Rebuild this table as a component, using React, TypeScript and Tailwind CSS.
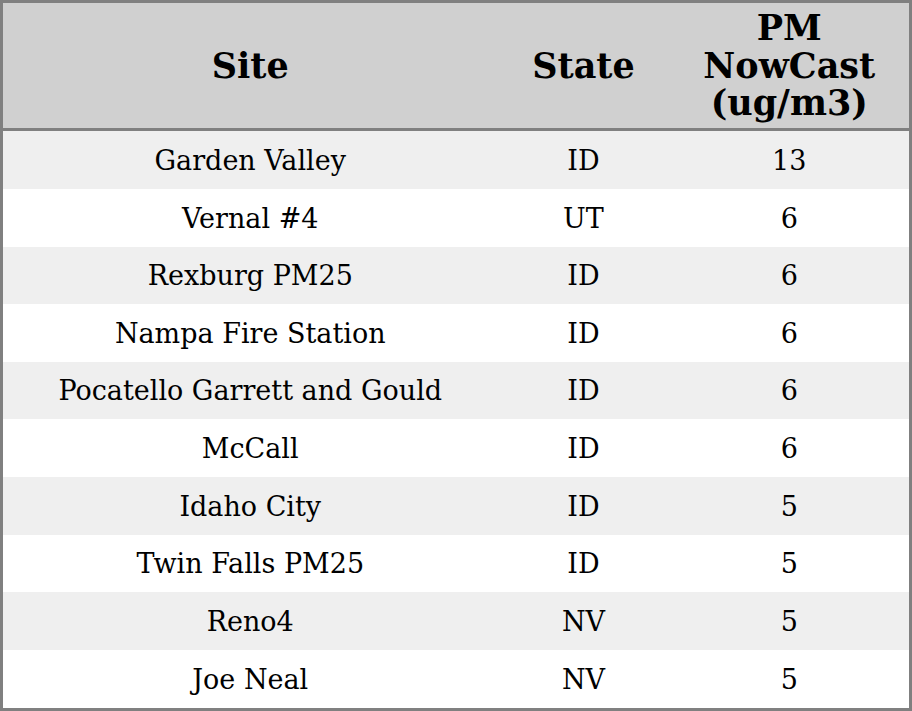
const rows = [
  { site: "Garden Valley", state: "ID", pm: 13 },
  { site: "Vernal #4", state: "UT", pm: 6 },
  { site: "Rexburg PM25", state: "ID", pm: 6 },
  { site: "Nampa Fire Station", state: "ID", pm: 6 },
  { site: "Pocatello Garrett and Gould", state: "ID", pm: 6 },
  { site: "McCall", state: "ID", pm: 6 },
  { site: "Idaho City", state: "ID", pm: 5 },
  { site: "Twin Falls PM25", state: "ID", pm: 5 },
  { site: "Reno4", state: "NV", pm: 5 },
  { site: "Joe Neal", state: "NV", pm: 5 },
];

export default function App() {
  return (
    <div className="h-[711px] w-[912px] bg-white font-['DejaVu_Serif',serif] text-black">
      <table className="h-full w-full table-fixed border-collapse border-[3px] border-[#808080]">
        <colgroup>
          <col className="w-[496px]" />
          <col className="w-[172px]" />
          <col />
        </colgroup>
        <thead>
          <tr className="h-[128px] border-b-[3px] border-[#808080] bg-[#d0d0d0] text-[35px] font-bold leading-[37.5px]">
            <th>Site</th>
            <th>State</th>
            <th>
              PM
              <br />
              NowCast
              <br />
              (ug/m3)
            </th>
          </tr>
        </thead>
        <tbody className="text-[27px]">
          {rows.map((r, i) => (
            <tr
              key={r.site}
              className={i % 2 === 0 ? "bg-[#efefef]" : "bg-white"}
            >
              <td className="pt-[2px] text-center">{r.site}</td>
              <td className="pt-[2px] text-center">{r.state}</td>
              <td className="pt-[2px] text-center">{r.pm}</td>
            </tr>
          ))}
        </tbody>
      </table>
    </div>
  );
}
